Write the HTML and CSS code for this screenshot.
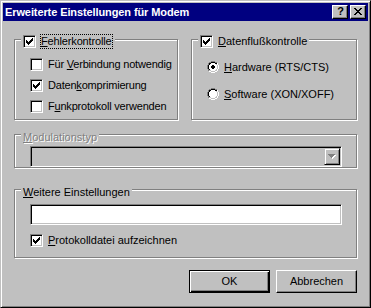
FILE: index.html
```html
<!DOCTYPE html>
<html lang="de">
<head>
<meta charset="utf-8">
<title>Erweiterte Einstellungen für Modem</title>
<link rel="stylesheet" href="styles.css">
</head>
<body>
<div class="window">
  <div class="titlebar">
    <span class="title">Erweiterte Einstellungen für Modem</span>
    <div class="caption-buttons">
      <span class="cap-btn help">?</span>
      <span class="cap-btn close"><svg width="8" height="7" viewBox="0 0 8 7" shape-rendering="crispEdges"><path d="M0 0h2v1h-2zM6 0h2v1h-2zM1 1h2v1h-2zM5 1h2v1h-2zM2 2h4v1h-4zM3 3h2v1h-2zM2 4h4v1h-4zM1 5h2v1h-2zM5 5h2v1h-2zM0 6h2v1h-2zM6 6h2v1h-2z"/></svg></span>
    </div>
  </div>

  <div class="client">
    <div class="top-row">
      <div class="group">
        <div class="legend legend-check">
          <span class="cb"><svg class="check" width="7" height="7" viewBox="0 0 7 7" shape-rendering="crispEdges"><path d="M0 2h1v3h-1zM1 3h1v3h-1zM2 4h1v3h-1zM3 3h1v3h-1zM4 2h1v3h-1zM5 1h1v3h-1zM6 0h1v3h-1z"/></svg></span>
          <span class="focus"><u>F</u>ehlerkontrolle</span>
        </div>
        <div class="items">
          <div class="row"><span class="cb"></span><span class="narrow">Für <u>V</u>erbindung notwendig</span></div>
          <div class="row"><span class="cb"><svg class="check" width="7" height="7" viewBox="0 0 7 7" shape-rendering="crispEdges"><path d="M0 2h1v3h-1zM1 3h1v3h-1zM2 4h1v3h-1zM3 3h1v3h-1zM4 2h1v3h-1zM5 1h1v3h-1zM6 0h1v3h-1z"/></svg></span><span class="narrow">Daten<u>k</u>omprimierung</span></div>
          <div class="row"><span class="cb"></span><span class="narrow">F<u>u</u>nkprotokoll verwenden</span></div>
        </div>
      </div>

      <div class="group">
        <div class="legend legend-check">
          <span class="cb"><svg class="check" width="7" height="7" viewBox="0 0 7 7" shape-rendering="crispEdges"><path d="M0 2h1v3h-1zM1 3h1v3h-1zM2 4h1v3h-1zM3 3h1v3h-1zM4 2h1v3h-1zM5 1h1v3h-1zM6 0h1v3h-1z"/></svg></span>
          <span><u>D</u>atenflußkontrolle</span>
        </div>
        <div class="radios">
          <div class="row radio-row">
            <svg class="radio" width="12" height="12" viewBox="0 0 12 12" shape-rendering="crispEdges">
              <path fill="#808080" d="M4 0h4v1h-4zM2 1h2v1h-2zM8 1h2v1h-2zM1 2h1v2h-1zM0 4h1v4h-1zM1 8h1v2h-1z"/>
              <path fill="#ffffff" d="M10 2h1v2h-1zM11 4h1v4h-1zM10 8h1v2h-1zM2 10h2v1h-2zM8 10h2v1h-2zM4 11h4v1h-4z"/>
              <path fill="#000000" d="M4 1h4v1h-4zM2 2h2v1h-2zM8 2h2v1h-2zM2 3h1v1h-1zM1 4h1v4h-1zM2 8h1v1h-1z"/>
              <path fill="#c0c0c0" d="M9 3h1v1h-1zM10 4h1v4h-1zM9 8h1v1h-1zM2 9h2v1h-2zM8 9h2v1h-2zM4 10h4v1h-4z"/>
              <path fill="#ffffff" d="M4 2h4v1h-4zM3 3h6v1h-6zM2 4h8v4h-8zM3 8h6v1h-6zM4 9h4v1h-4z"/>
              <path fill="#000000" d="M5 4h2v1h-2zM4 5h4v2h-4zM5 7h2v1h-2z"/>
            </svg>
            <span><u>H</u>ardware (RTS/CTS)</span>
          </div>
          <div class="row radio-row">
            <svg class="radio" width="12" height="12" viewBox="0 0 12 12" shape-rendering="crispEdges">
              <path fill="#808080" d="M4 0h4v1h-4zM2 1h2v1h-2zM8 1h2v1h-2zM1 2h1v2h-1zM0 4h1v4h-1zM1 8h1v2h-1z"/>
              <path fill="#ffffff" d="M10 2h1v2h-1zM11 4h1v4h-1zM10 8h1v2h-1zM2 10h2v1h-2zM8 10h2v1h-2zM4 11h4v1h-4z"/>
              <path fill="#000000" d="M4 1h4v1h-4zM2 2h2v1h-2zM8 2h2v1h-2zM2 3h1v1h-1zM1 4h1v4h-1zM2 8h1v1h-1z"/>
              <path fill="#c0c0c0" d="M9 3h1v1h-1zM10 4h1v4h-1zM9 8h1v1h-1zM2 9h2v1h-2zM8 9h2v1h-2zM4 10h4v1h-4z"/>
              <path fill="#ffffff" d="M4 2h4v1h-4zM3 3h6v1h-6zM2 4h8v4h-8zM3 8h6v1h-6zM4 9h4v1h-4z"/>
            </svg>
            <span><u>S</u>oftware (XON/XOFF)</span>
          </div>
        </div>
      </div>
    </div>

    <div class="group g3">
      <div class="legend legend-text disabled"><span><u>M</u>odulationstyp</span></div>
      <div class="combo">
        <span class="drop-btn"><svg width="8" height="5" viewBox="0 0 8 5" shape-rendering="crispEdges"><path fill="#ffffff" d="M1 1h7v1h-7zM2 2h5v1h-5zM3 3h3v1h-3zM4 4h1v1h-1z"/><path fill="#808080" d="M0 0h7v1h-7zM1 1h5v1h-5zM2 2h3v1h-3zM3 3h1v1h-1z"/></svg></span>
      </div>
    </div>

    <div class="group g4">
      <div class="legend legend-text"><span><u>W</u>eitere Einstellungen</span></div>
      <div class="input"></div>
      <div class="row log-row"><span class="cb"><svg class="check" width="7" height="7" viewBox="0 0 7 7" shape-rendering="crispEdges"><path d="M0 2h1v3h-1zM1 3h1v3h-1zM2 4h1v3h-1zM3 3h1v3h-1zM4 2h1v3h-1zM5 1h1v3h-1zM6 0h1v3h-1z"/></svg></span><span><u>P</u>rotokolldatei aufzeichnen</span></div>
    </div>

    <div class="buttons">
      <span class="btn default">OK</span>
      <span class="btn">Abbrechen</span>
    </div>
  </div>
</div>
</body>
</html>
```

FILE: styles.css
```css
* { box-sizing: border-box; }

html, body {
  margin: 0;
  padding: 0;
  background: #c0c0c0;
}

body {
  font-family: "Liberation Sans", Arial, sans-serif;
  font-size: 11px;
  line-height: 13px;
  color: #000;
}

u { text-decoration: underline; }

.window {
  width: 371px;
  height: 308px;
  border: 1px solid;
  border-color: #c0c0c0 #000 #000 #c0c0c0;
  padding: 2px;
  box-shadow: inset 1px 1px #fff, inset -1px -1px #808080;
  background: #c0c0c0;
  display: flex;
  flex-direction: column;
}

.titlebar {
  height: 18px;
  flex: none;
  background: #000080;
  display: flex;
  align-items: flex-start;
  justify-content: space-between;
  padding-left: 2px;
}

.title {
  color: #fff;
  font-weight: bold;
  line-height: 18px;
  letter-spacing: -0.1px;
  white-space: nowrap;
}

.caption-buttons {
  display: flex;
  gap: 2px;
  margin: 2px 2px 0 0;
}

.cap-btn {
  display: block;
  width: 16px;
  height: 14px;
  border: 1px solid;
  border-color: #fff #000 #000 #fff;
  box-shadow: inset -1px -1px #808080;
  background: #c0c0c0;
}

.cap-btn.help {
  font-weight: bold;
  text-align: center;
  line-height: 11px;
  padding-left: 1px;
}

.cap-btn.close {
  padding: 2px 0 0 3px;
}

.cap-btn svg { display: block; }

.client {
  flex: 1;
  padding: 18px 11px 0 11px;
  display: flex;
  flex-direction: column;
}

.top-row {
  display: grid;
  grid-template-columns: 164px 166px;
  column-gap: 13px;
  height: 81px;
}

.group {
  border: 1px solid #808080;
  box-shadow: inset 1px 1px #fff, 1px 1px #fff;
}

.legend {
  display: flex;
  align-items: center;
  gap: 5px;
  width: fit-content;
  height: 13px;
  margin-left: 6px;
  padding: 0 2px;
  background: #c0c0c0;
  white-space: nowrap;
}

.legend-check { margin-top: -5px; }
.legend-text { margin-top: -4px; }

.disabled {
  color: #808080;
  text-shadow: 1px 1px #fff;
}

.focus {
  display: inline-block;
  height: 13px;
  outline: 1px dotted #000;
  outline-offset: 0;
  margin-right: 1px;
  letter-spacing: -0.15px;
}

.narrow { letter-spacing: -0.2px; }

.cb {
  width: 13px;
  height: 13px;
  flex: none;
  border: 1px solid;
  border-color: #808080 #fff #fff #808080;
  box-shadow: inset 1px 1px #000, inset -1px -1px #c0c0c0;
  background: #fff;
  display: flex;
  align-items: center;
  justify-content: center;
}

.check { display: block; }

.row {
  display: flex;
  align-items: center;
  gap: 5px;
  height: 13px;
  white-space: nowrap;
}

.items {
  display: flex;
  flex-direction: column;
  gap: 8px;
  margin-top: 10px;
  padding-left: 15px;
}

.radios {
  display: flex;
  flex-direction: column;
  gap: 14px;
  margin-top: 13px;
  padding-left: 15px;
}

.radio-row { align-items: flex-start; }
.radio { display: block; flex: none; }

.g3 {
  margin-top: 14px;
  height: 34px;
}

.combo {
  display: flex;
  justify-content: flex-end;
  height: 21px;
  margin: 2px 14px 0 15px;
  padding: 1px;
  border: 1px solid;
  border-color: #808080 #fff #fff #808080;
  box-shadow: inset 1px 1px #000, inset -1px -1px #c0c0c0;
  background: #c0c0c0;
}

.drop-btn {
  width: 16px;
  height: 17px;
  border: 1px solid;
  border-color: #c0c0c0 #000 #000 #c0c0c0;
  box-shadow: inset 1px 1px #fff, inset -1px -1px #808080;
  display: flex;
  align-items: center;
  justify-content: center;
}

.drop-btn svg { display: block; }

.g4 {
  margin-top: 21px;
  height: 69px;
}

.input {
  height: 21px;
  margin: 5px 14px 0 15px;
  border: 1px solid;
  border-color: #808080 #fff #fff #808080;
  box-shadow: inset 1px 1px #000, inset -1px -1px #c0c0c0;
  background: #fff;
}

.log-row {
  margin: 9px 0 0 15px;
}

.buttons {
  display: flex;
  justify-content: flex-end;
  gap: 6px;
  margin-top: 12px;
}

.btn {
  width: 81px;
  height: 23px;
  border: 1px solid;
  border-color: #fff #000 #000 #fff;
  box-shadow: inset -1px -1px #808080;
  display: flex;
  align-items: center;
  justify-content: center;
}

.btn.default {
  border-color: #000;
  box-shadow: inset 1px 1px #fff, inset -1px -1px #000, inset -2px -2px #808080;
}
```
